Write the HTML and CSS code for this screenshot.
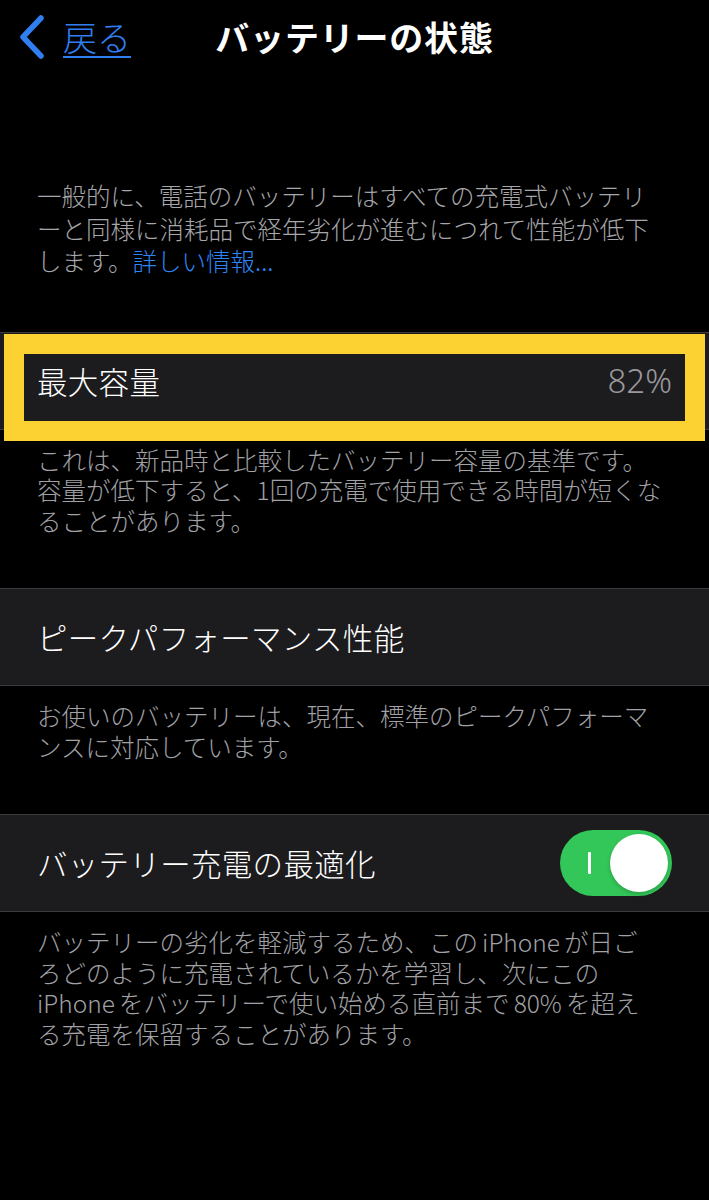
FILE: index.html
```html
<!DOCTYPE html>
<html lang="ja">
<head>
<meta charset="utf-8">
<link rel="stylesheet" href="styles.css">
</head>
<body>
<div class="screen">
  <header class="nav">
    <a class="back" href="#">
      <svg class="chev" width="28" height="44" viewBox="0 0 28 44"><path d="M23 3 L5 22 L23 41" fill="none" stroke="#2f7ff0" stroke-width="5.5" stroke-linecap="round" stroke-linejoin="round"/></svg>
      <span class="back-label">戻る</span>
    </a>
    <h1 class="title">バッテリーの状態</h1>
    <div class="spacer"></div>
  </header>

  <p class="intro">一般的に、電話のバッテリーはすべての充電式バッテリ<br>ーと同様に消耗品で経年劣化が進むにつれて性能が低下<br>します。<a class="link" href="#">詳しい情報...</a></p>

  <section class="group">
    <div class="row highlighted">
      <span class="row-label">最大容量</span>
      <span class="row-value">82%</span>
      <div class="annot"></div>
    </div>
    <p class="caption caption-first">これは、新品時と比較したバッテリー容量の基準です。<br>容量が低下すると、1回の充電で使用できる時間が短くな<br>ることがあります。</p>
  </section>

  <section class="group">
    <div class="row">
      <span class="row-label">ピークパフォーマンス性能</span>
    </div>
    <p class="caption">お使いのバッテリーは、現在、標準のピークパフォーマ<br>ンスに対応しています。</p>
  </section>

  <section class="group">
    <div class="row">
      <span class="row-label">バッテリー充電の最適化</span>
      <div class="toggle">
        <span class="on-mark"></span>
        <span class="knob"></span>
      </div>
    </div>
    <p class="caption">バッテリーの劣化を軽減するため、この&#8198;iPhone&#8198;が日ご<br>ろどのように充電されているかを学習し、次にこの<br>iPhone&#8198;をバッテリーで使い始める直前まで&#8198;80%&#8198;を超え<br>る充電を保留することがあります。</p>
  </section>
</div>
</body>
</html>
```

FILE: styles.css
```css
html, body {
  margin: 0;
  padding: 0;
  background: #000;
}
body {
  font-family: "Noto Sans CJK JP", "Noto Sans", sans-serif;
  color: #fff;
  width: 709px;
  height: 1200px;
  overflow: hidden;
}
.screen {
  display: flex;
  flex-direction: column;
}
.nav {
  height: 74px;
  display: grid;
  grid-template-columns: 1fr auto 1fr;
  align-items: center;
}
.back {
  display: flex;
  align-items: center;
  gap: 17px;
  padding-left: 18px;
  color: #2f7ff0;
  text-decoration: none;
}
.chev {
  display: block;
}
.back-label {
  font-size: 34px;
  line-height: 40px;
  text-decoration: underline;
  text-decoration-thickness: 2px;
  text-underline-offset: 5px;
  font-weight: 300;
}
.title {
  margin: 0;
  font-size: 34px;
  font-weight: 700;
  letter-spacing: 0.8px;
  line-height: 40px;
  color: #fff;
}
.intro {
  margin: 106px 0 0;
  padding: 0 0 0 37px;
  font-size: 24.5px;
  line-height: 32.5px;
  color: #a7a7ab;
  font-weight: 300;
  white-space: nowrap;
}
.link {
  color: #2f84f5;
  text-decoration: none;
}
.group {
  display: flex;
  flex-direction: column;
}
.intro + .group {
  margin-top: 54px;
}
.row {
  position: relative;
  height: 96px;
  background: #1c1c1e;
  border-top: 1px solid #3a3a3c;
  border-bottom: 1px solid #3a3a3c;
  display: flex;
  align-items: center;
  justify-content: space-between;
  padding: 0 37px;
}
.row-label {
  font-size: 30.5px;
  font-weight: 300;
  color: #fff;
  letter-spacing: 0.3px;
}
.row-value {
  font-size: 33px;
  font-weight: 300;
  color: #98989d;
  font-family: "Noto Sans", "Noto Sans CJK JP", sans-serif;
}
.annot {
  position: absolute;
  left: 4px;
  right: 4px;
  top: 1px;
  height: 107px;
  box-sizing: border-box;
  border: 20px solid #fcd232;
  pointer-events: none;
}
.caption {
  margin: 0;
  padding: 15px 0 52px 37px;
  font-size: 24.5px;
  line-height: 30.5px;
  color: #a1a1a6;
  font-weight: 300;
  white-space: nowrap;
}
.toggle {
  position: relative;
  width: 112px;
  height: 66px;
  border-radius: 33px;
  background: #33c759;
  margin-right: 0;
  display: flex;
  align-items: center;
  justify-content: space-between;
  padding: 0 4px 0 28px;
  box-sizing: border-box;
}
.on-mark {
  width: 3px;
  height: 22px;
  background: #fff;
  border-radius: 1px;
}
.knob {
  width: 58px;
  height: 58px;
  border-radius: 50%;
  background: #fff;
  box-shadow: 0 2px 4px rgba(0,0,0,0.2);
}
```
